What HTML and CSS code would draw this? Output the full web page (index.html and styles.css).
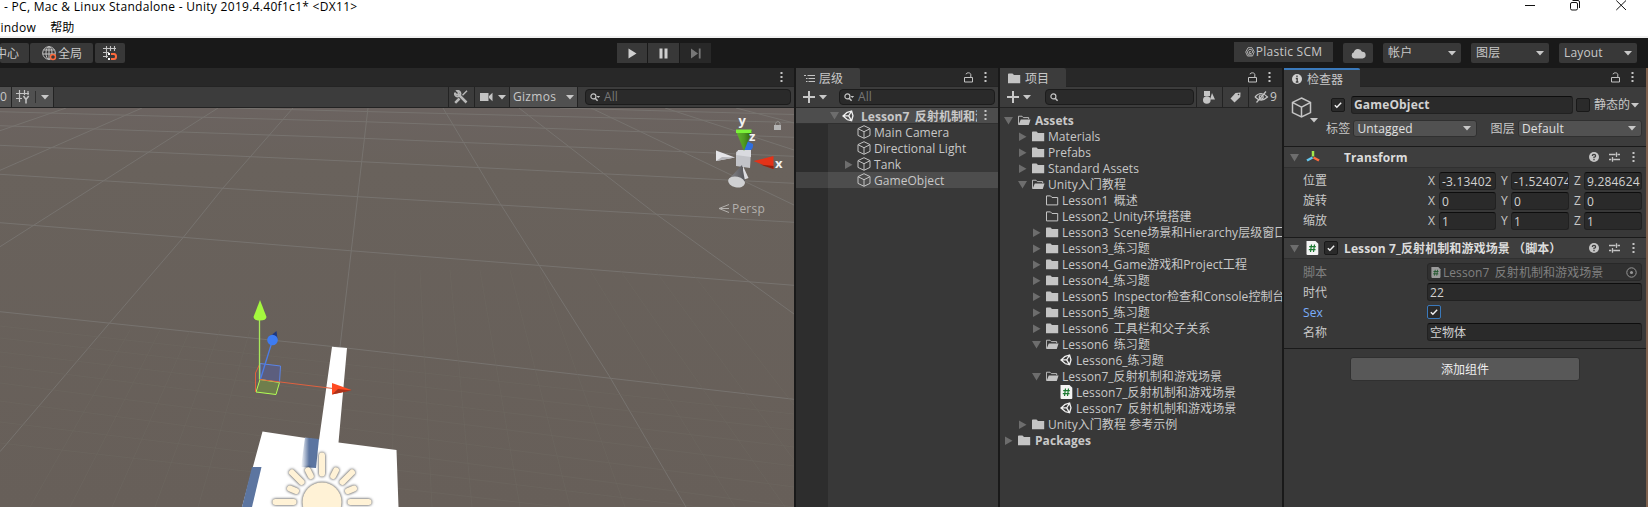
FILE: index.html
```html
<!DOCTYPE html>
<html lang="zh-CN">
<head>
<meta charset="utf-8">
<title>Unity 2019.4.40f1c1</title>
<link rel="stylesheet" href="styles.css">
</head>
<body>
<svg class="defs" width="0" height="0">
  <symbol id="down" viewBox="0 0 8 5"><path d="M0 0h8L4 4.6z" fill="currentColor"/></symbol>
  <symbol id="fold-open" viewBox="0 0 9 9"><path d="M0 1h9L4.500 8.500z" fill="#6d6d6d"/></symbol>
  <symbol id="fold-closed" viewBox="0 0 9 9"><path d="M1 0.500v8.500L8.500 4.700z" fill="#6d6d6d"/></symbol>
  <symbol id="dots" viewBox="0 0 3 11"><path d="M.5 0h2v2h-2zM.5 4h2v2h-2zM.5 8h2v2h-2z" fill="#c4c4c4"/></symbol>
  <symbol id="lock" viewBox="0 0 9 11"><path d="M.5 5.500h8v4.500h-8zM2 2.300C2 .3 6.800 .3 6.800 2.500v3" fill="none" stroke="#c4c4c4"/></symbol>
  <symbol id="plus" viewBox="0 0 12 12"><path d="M6 0v12M0 6h12" stroke="#c8c8c8" stroke-width="2"/></symbol>
  <symbol id="search" viewBox="0 0 11 9"><path d="M5.200 5.200L7.600 7.800" stroke="#c4c4c4" stroke-width="1.500"/><circle cx="3.400" cy="3.400" r="2.500" fill="none" stroke="#c4c4c4" stroke-width="1.200"/></symbol>
  <symbol id="search-menu" viewBox="0 0 11 9"><path d="M5.200 5.200L7.600 7.800" stroke="#c4c4c4" stroke-width="1.500"/><circle cx="3.400" cy="3.400" r="2.500" fill="none" stroke="#c4c4c4" stroke-width="1.200"/><path d="M6.500 3h3.700L8.300 5z" fill="#c4c4c4"/></symbol>
  <symbol id="folder" viewBox="0 0 13 11"><path d="M0 1.200Q0 .4 .8 .4H4.500L6 2H12.200V10.300H0z" fill="#c4c4c4"/></symbol>
  <symbol id="folder-empty" viewBox="0 0 13 11"><path d="M.5 .9H4.500L6 2.500H11.700V9.900H.5z" fill="none" stroke="#c4c4c4"/></symbol>
  <symbol id="folder-open" viewBox="0 0 14 11"><path d="M.5 10V.9H4.300L5.800 2.400H11.500V4" fill="none" stroke="#c4c4c4"/><path d="M3 4.300H13.500L11.600 10.400H.5z" fill="#c4c4c4"/></symbol>
  <symbol id="cube" viewBox="0 0 14 14"><path d="M7 .7L13 3.600V10.400L7 13.300L1 10.400V3.600zM1.200 3.800L7 6.700L12.800 3.800M7 6.700V13" fill="none" stroke="#c4c4c4" stroke-width="1"/></symbol>
  <symbol id="unity" viewBox="0 0 12 12"><path d="M5.200 2.300L9.600 1L11 5.800L9.600 10.800L5.200 9.600M5.200 2.300L1 5.900L5.200 9.600M1.500 5.900H6.700M9.600 1L6.700 5.900L9.600 10.800" fill="none" stroke="#f0f0f0" stroke-width="1.300"/></symbol>
  <symbol id="script" viewBox="0 0 13 14"><path d="M.5 0H9.500L12.300 2.800V13Q12.300 14 11.300 14H1.500Q.5 14 .5 13z" fill="#f4f4f4"/><path d="M5.500 3.500L4.500 11M8.500 3.500L7.500 11M3.200 5.700H9.800M2.800 8.700H9.500" stroke="#1c7a31" stroke-width="1.200"/></symbol>
  <symbol id="check" viewBox="0 0 14 14"><path d="M3.300 7.200L5.700 9.600L10.700 4.500" fill="none" stroke="#f0f0f0" stroke-width="1.700"/></symbol>
  <symbol id="help" viewBox="0 0 10 10"><circle cx="5" cy="5" r="5" fill="#c4c4c4"/><path d="M3.400 4Q3.400 2.400 5 2.400T6.600 3.900Q6.600 4.900 5 5.200V6.300M5 7V8.300" fill="none" stroke="#3c3c3c" stroke-width="1.300"/></symbol>
  <symbol id="preset" viewBox="0 0 11 10"><path d="M0 2.500H6.500M8.500 2.500H11M7.500 .2V5M0 7.500H2.300M4.300 7.500H11M3.500 5V9.800" stroke="#c4c4c4" stroke-width="1.300"/></symbol>
</svg>

<header class="window-bar">
  <div class="title">- PC, Mac &amp; Linux Standalone - Unity 2019.4.40f1c1* &lt;DX11&gt;</div>
  <div class="window-buttons">
    <svg width="102" height="12" viewBox="0 0 102 12" fill="none" stroke="#111"><path d="M0 5.500H10M91.300 .5L101 10M101 .5L91.300 10"/><rect x="45.500" y="2.500" width="7" height="7.500" rx="1.500"/><path d="M47.500 .5H53Q54.500 .5 54.500 2V8"/></svg>
  </div>
</header>
<nav class="menu"><span class="menu-window">Window</span><span>帮助</span></nav>

<div class="toolbar">
  <div class="tool-group">
    <div class="tool center-mode"><span>中心</span></div>
    <div class="tool global"><svg width="15" height="15" viewBox="0 0 15 15" fill="none" stroke="#c4c4c4"><circle cx="7" cy="7" r="6.300"/><ellipse cx="7" cy="7" rx="3" ry="6.300"/><path d="M7 .7V13.300M1.500 4H12.500M.7 8H13"/><circle cx="11" cy="11" r="2.500" fill="#383838" stroke="#ff6b3d" stroke-width="1.400"/></svg><span>全局</span></div>
    <div class="tool snap"><svg width="14" height="15" viewBox="0 0 14 15"><path d="M3.500 0V12M7.500 0V5M11.500 0V5M0 2.500H13M0 6.500H6M0 10.500H5" stroke="#c4c4c4" stroke-width="1.100"/><path d="M5 7h2v2H5zM5 12h2v2H5z" fill="#fff"/><path d="M8 8H11Q13 8 13 10.500T11 13H8" fill="none" stroke="#ff6b3d" stroke-width="2"/></svg></div>
  </div>
  <div class="play-group">
    <div class="tool"><svg width="9" height="11"><path d="M.5 .5L8.500 5.500L.5 10.500z" fill="#d0d0d0"/></svg></div>
    <div class="tool"><svg width="9" height="11"><path d="M.5 .5h3v10h-3zM5.500 .5h3v10h-3z" fill="#d0d0d0"/></svg></div>
    <div class="tool muted"><svg width="10" height="11"><path d="M0 .5L7 5.500L0 10.500zM7.800 .5h1.800v10H7.800z" fill="#777"/></svg></div>
  </div>
  <div class="account-group">
    <div class="tool plastic"><svg width="10" height="10" viewBox="0 0 10 10" fill="none" stroke="#aaa"><path d="M3 .7H7L9.200 4.800L7.500 9H2.500L.7 5z"/><path d="M7 8H3.500L2.300 4.800L4 2.500H6.500L7.800 5L6.300 6.500H4.500L4.200 4.700H6"/></svg><span>Plastic SCM</span></div>
    <div class="tool cloud"><svg width="15" height="11" viewBox="0 0 15 11"><path d="M3.500 10.500A3.200 3.200 0 0 1 2.800 4.300A4.300 4.300 0 0 1 11 3.700A3.400 3.400 0 0 1 11.500 10.500z" fill="#c4c4c4"/></svg></div>
    <div class="tool menu-button"><span>帐户</span><svg class="down"><use href="#down"/></svg></div>
    <div class="tool menu-button"><span>图层</span><svg class="down"><use href="#down"/></svg></div>
    <div class="tool menu-button"><span>Layout</span><svg class="down"><use href="#down"/></svg></div>
  </div>
</div>

<main class="workspace">
  <section class="pane scene">
    <div class="tabs"><svg class="dots"><use href="#dots"/></svg></div>
    <div class="bar">
      <div class="bar-button zero">0</div>
      <div class="bar-button grid-axis"><svg width="14" height="14" viewBox="0 0 14 14"><path d="M3.500 0V12M8.500 0V5M0 3.500H13M0 8.500H6M12 1V5" stroke="#c4c4c4" stroke-width="1.200"/><path d="M7.500 6L10 9.500L12.700 6M10 9.500V13.500" fill="none" stroke="#c4c4c4" stroke-width="1.500"/></svg><i></i><svg class="down"><use href="#down"/></svg></div>
      <div class="bar-space"></div>
      <div class="bar-button plain tools"><svg width="14" height="14" viewBox="0 0 14 14" fill="none" stroke="#b8b8b8"><path d="M4 4L12.500 12.500" stroke-width="2.500"/><path d="M.8 2.800L3 5L5 3L2.800 .8A3 3 0 1 1 .8 2.800" stroke-width="1.500"/><path d="M13 .8L8.500 5.300" stroke-width="1.500"/><path d="M5.500 8.500L1.200 12.800" stroke-width="2.500"/></svg></div>
      <div class="bar-button plain camera"><svg width="13" height="10"><path d="M0 1h8.500v8H0zM9 4L12.500 .8V9.200L9 6z" fill="#c4c4c4"/></svg><svg class="down"><use href="#down"/></svg></div>
      <div class="bar-button gizmos"><span>Gizmos</span><i></i><svg class="down"><use href="#down"/></svg></div>
      <div class="search"><svg class="lens"><use href="#search-menu"/></svg><span>All</span></div>
    </div>
    <svg class="viewport" viewBox="0 108 794 399" width="794" height="399">
      <defs>
        <linearGradient id="ground" x1="0" y1="0" x2="0" y2="1"><stop offset="0" stop-color="#6b6360"/><stop offset=".15" stop-color="#69625c"/><stop offset="1" stop-color="#675f59"/></linearGradient>
        <linearGradient id="shade" x1="0" y1="0" x2="1" y2="0"><stop offset="0" stop-color="#fff"/><stop offset=".45" stop-color="#5c75a0"/><stop offset="1" stop-color="#5c75a0"/></linearGradient>
        <linearGradient id="coneGreen"><stop offset="0" stop-color="#62b42e"/><stop offset=".5" stop-color="#4f9a22"/><stop offset="1" stop-color="#2c5c10"/></linearGradient>
        <linearGradient id="coneGray"><stop offset="0" stop-color="#8a8a8e"/><stop offset="1" stop-color="#55555a"/></linearGradient>
        <filter id="halo" x="-20%" y="-20%" width="140%" height="140%" color-interpolation-filters="sRGB"><feDropShadow dx="0" dy="0" stdDeviation="1.800" flood-color="#000" flood-opacity=".85"/></filter>
      </defs>
      <rect y="108" width="794" height="399" fill="url(#ground)"/>
      <g fill="none" stroke="#77736f" stroke-width="1">
        <path d="M0 311.700L340 347.300L794 399.300M0 222.700L350 250.700L794 285.300M0 174.300L358 196.700L794 222.300M0 145.300L361 161.700L794 183.300M0 125.700L363 138.300L794 156.300M0 111.700L364 121.700L794 137.300M230 108L365 111.500L794 122.500M560 108L794 114.500"/>
        <path d="M368 108L340 347M293 108L223 188L183 237.700L109 323.700L0 451.700M218 108L0 246.700M142 108L0 170.300M66 108L0 130.700M443 108L500 203.300L539 265L609 375.700L686 507M519 108L655 213.300L794 314M591 108L794 205M665 108L794 150M736 108L794 123"/>
      </g>
      <g fill="none" stroke="#6d6761" stroke-width="1" opacity=".55">
        <path d="M0 338L794 430M0 366L794 466M0 401L794 507M0 443L560 507M0 326L794 414M0 352L794 447M0 383L794 487M0 422L700 507M130 330L30 507M160 330L70 507M190 330L112 507M220 330L155 507M250 330L198 507M395 270L392 507M420 270L432 507M450 270L472 507M480 270L520 507M510 270L570 507M540 270L625 507M590 270L735 507M620 270L785 507M655 270L794 460M690 270L794 405"/>
      </g>
      <path fill="#fff" d="M332 346.700L347 348L338.500 442.500L396.500 450L398.500 507H242L262.500 431.500L319 440z"/>
      <path fill="url(#shade)" d="M305 437.500L319 439L316 468L301 467z"/>
      <path fill="#5c75a0" d="M252 467H261.500L252 507H242z"/>
      <g filter="url(#halo)" fill="#fff2d6" stroke="#fff2d6" stroke-width="6" stroke-linecap="round">
        <circle cx="322" cy="502" r="19.500" stroke="none"/>
        <path d="M322 455.500V473.500M275.500 502H293.500M350.500 502H368.500M292 472.500L301.500 482M352 472.500L342.500 482M308 470.500L310.800 476M336 470.500L333.200 476M290 488.500L296 491M354 488.500L348 491"/>
      </g>
      <path fill="#5c5e7e" stroke="#5a84e8" d="M260 363.500L280.500 366L279.500 382.500L260 379.500z"/>
      <path fill="#6f7e4c" stroke="#b2ff55" d="M260 379.500L279.500 382.500L276 394.500L256 392z"/>
      <path fill="none" stroke="#e0603f" d="M260 363.500L255.500 373V392M260 379.500L333 388.500"/>
      <path d="M259.500 379.500V318" stroke="#a8e85b" stroke-width="1.300"/>
      <path d="M260.500 379L272 342" stroke="#4c7de8" stroke-width="1.300"/>
      <path fill="#a4f73e" d="M260 300L266.500 317Q266 320.500 260 320.500T253.500 317z"/>
      <path fill="#1d3780" d="M276.500 331L268 338L277.500 339z"/><circle cx="272.500" cy="340" r="5.300" fill="#3e7cf2"/>
      <path fill="#ff4b22" d="M332 383L351.500 390L332 394.500z"/><path fill="#a9321b" d="M332 394.500L351.500 390.500L338 389z"/>
      <path fill="#2f6fe0" d="M744 150L747 141L753 144Q754 149 749 151z"/>
      <path fill="#c2c3c8" d="M736 152L740 150L751 151L750 168L736 166z"/><path fill="#d9dadf" d="M738 150H751V157L736 155z"/>
      <path fill="#e4e4e8" d="M716 150.500L735 157.500L716 161z"/><path fill="#b5b5ba" d="M716 161L735 157.500L722 157z"/>
      <path fill="url(#coneGreen)" d="M736 131L744 151L752 131z"/><path fill="#7cf23a" d="M736 129.500H751.500V133H736z"/>
      <path fill="#e33319" d="M753.500 161L773.500 156V169z"/><path fill="#92210f" d="M760 164.500L773.500 166V169z"/>
      <path fill="#dcdce0" d="M743 166L748.500 178L743 180z"/>
      <path fill="url(#coneGray)" d="M742 165L728 180L745 181z"/><ellipse cx="736.500" cy="182" rx="8.500" ry="5.300" fill="#cfd0d2" transform="rotate(12 736.500 182)"/>
      <g class="axis-label"><text x="738.500" y="124.500">y</text><text x="749" y="141">z</text><text x="775" y="168">x</text></g>
      <path fill="#b4b4b4" d="M774 125h7v5h-7z"/><path d="M775.500 125V123.500Q777.500 119.500 780 123V125" fill="none" stroke="#92908d"/>
      <path d="M729 204.500L719 208.500L729 212.500M719 208.500H729" fill="none" stroke="#b3b0ad"/>
      <text class="persp" x="732" y="213">Persp</text>
    </svg>
  </section>

  <section class="pane hierarchy">
    <div class="tabs"><div class="tab"><svg width="11" height="9"><path d="M3.500 1.500H11M4.500 4.500H11M4.500 7.500H11M0 1.500H2M2 4.500H3.500M2 7.500H3.500" stroke="#c4c4c4"/></svg><span>层级</span></div><svg class="lock"><use href="#lock"/></svg><svg class="dots"><use href="#dots"/></svg></div>
    <div class="bar">
      <svg class="plus"><use href="#plus"/></svg><svg class="down add-menu"><use href="#down"/></svg>
      <div class="search"><svg class="lens"><use href="#search-menu"/></svg><span>All</span></div>
    </div>
    <div class="tree">
      <div class="node scene-node"><svg class="fold"><use href="#fold-open"/></svg><svg class="ico-unity"><use href="#unity"/></svg><span class="scene-name spaced">Lesson7 反射机制和游戏场景</span><svg class="dots"><use href="#dots"/></svg></div>
      <div class="node object"><svg class="ico-cube"><use href="#cube"/></svg><span>Main Camera</span></div>
      <div class="node object"><svg class="ico-cube"><use href="#cube"/></svg><span>Directional Light</span></div>
      <div class="node object parent"><svg class="fold"><use href="#fold-closed"/></svg><svg class="ico-cube"><use href="#cube"/></svg><span>Tank</span></div>
      <div class="node object selected"><svg class="ico-cube"><use href="#cube"/></svg><span>GameObject</span></div>
    </div>
  </section>

  <section class="pane project">
    <div class="tabs"><div class="tab"><svg class="ico-folder"><use href="#folder"/></svg><span>项目</span></div><svg class="lock"><use href="#lock"/></svg><svg class="dots"><use href="#dots"/></svg></div>
    <div class="bar">
      <svg class="plus"><use href="#plus"/></svg><svg class="down add-menu"><use href="#down"/></svg>
      <div class="search"><svg class="lens"><use href="#search"/></svg></div>
      <div class="bar-button plain filter"><svg width="13" height="13"><path d="M1 0h6v5H1zM9 2L12 8.500H7z" fill="#c4c4c4"/><circle cx="3.800" cy="9" r="3.800" fill="#c4c4c4"/></svg></div>
      <div class="bar-button plain filter"><svg width="11" height="11"><path d="M5.500 1L10.500 .5L10.300 5L4.500 10.500L.5 6.500z" fill="#c4c4c4"/><circle cx="8.500" cy="2.500" r=".8" fill="#3c3c3c"/></svg></div>
      <div class="bar-button plain hidden-count"><svg width="15" height="12" viewBox="0 0 15 12" fill="none" stroke="#c4c4c4" stroke-width="1.200"><path d="M1 6Q7 -1 13.500 6Q7 12 1 6M12 .5L2.500 11.500"/><circle cx="7.200" cy="6" r="2"/></svg><span>9</span></div>
    </div>
    <div class="files">
      <div class="node level0 strong"><svg class="fold"><use href="#fold-open"/></svg><svg class="ico-folder"><use href="#folder-open"/></svg><span>Assets</span></div>
      <div class="node level1"><svg class="fold"><use href="#fold-closed"/></svg><svg class="ico-folder"><use href="#folder"/></svg><span>Materials</span></div>
      <div class="node level1"><svg class="fold"><use href="#fold-closed"/></svg><svg class="ico-folder"><use href="#folder"/></svg><span>Prefabs</span></div>
      <div class="node level1"><svg class="fold"><use href="#fold-closed"/></svg><svg class="ico-folder"><use href="#folder"/></svg><span>Standard Assets</span></div>
      <div class="node level1"><svg class="fold"><use href="#fold-open"/></svg><svg class="ico-folder"><use href="#folder-open"/></svg><span>Unity入门教程</span></div>
      <div class="node level2"><svg class="fold"></svg><svg class="ico-folder"><use href="#folder-empty"/></svg><span class="spaced">Lesson1 概述</span></div>
      <div class="node level2"><svg class="fold"></svg><svg class="ico-folder"><use href="#folder-empty"/></svg><span>Lesson2_Unity环境搭建</span></div>
      <div class="node level2"><svg class="fold"><use href="#fold-closed"/></svg><svg class="ico-folder"><use href="#folder"/></svg><span class="spaced">Lesson3 Scene场景和Hierarchy层级窗口</span></div>
      <div class="node level2"><svg class="fold"><use href="#fold-closed"/></svg><svg class="ico-folder"><use href="#folder"/></svg><span>Lesson3_练习题</span></div>
      <div class="node level2"><svg class="fold"><use href="#fold-closed"/></svg><svg class="ico-folder"><use href="#folder"/></svg><span>Lesson4_Game游戏和Project工程</span></div>
      <div class="node level2"><svg class="fold"><use href="#fold-closed"/></svg><svg class="ico-folder"><use href="#folder"/></svg><span>Lesson4_练习题</span></div>
      <div class="node level2"><svg class="fold"><use href="#fold-closed"/></svg><svg class="ico-folder"><use href="#folder"/></svg><span class="spaced">Lesson5 Inspector检查和Console控制台</span></div>
      <div class="node level2"><svg class="fold"><use href="#fold-closed"/></svg><svg class="ico-folder"><use href="#folder"/></svg><span>Lesson5_练习题</span></div>
      <div class="node level2"><svg class="fold"><use href="#fold-closed"/></svg><svg class="ico-folder"><use href="#folder"/></svg><span class="spaced">Lesson6 工具栏和父子关系</span></div>
      <div class="node level2"><svg class="fold"><use href="#fold-open"/></svg><svg class="ico-folder"><use href="#folder-open"/></svg><span class="spaced">Lesson6 练习题</span></div>
      <div class="node level3"><svg class="fold"></svg><svg class="ico-unity"><use href="#unity"/></svg><span>Lesson6_练习题</span></div>
      <div class="node level2"><svg class="fold"><use href="#fold-open"/></svg><svg class="ico-folder"><use href="#folder-open"/></svg><span>Lesson7_反射机制和游戏场景</span></div>
      <div class="node level3"><svg class="fold"></svg><svg class="ico-script"><use href="#script"/></svg><span>Lesson7_反射机制和游戏场景</span></div>
      <div class="node level3"><svg class="fold"></svg><svg class="ico-unity"><use href="#unity"/></svg><span class="spaced">Lesson7 反射机制和游戏场景</span></div>
      <div class="node level1"><svg class="fold"><use href="#fold-closed"/></svg><svg class="ico-folder"><use href="#folder"/></svg><span>Unity入门教程 参考示例</span></div>
      <div class="node level0 strong"><svg class="fold"><use href="#fold-closed"/></svg><svg class="ico-folder"><use href="#folder"/></svg><span>Packages</span></div>
    </div>
  </section>

  <section class="pane inspector">
    <div class="tabs"><div class="tab active"><svg width="10" height="10"><circle cx="5" cy="5" r="5" fill="#d0d0d0"/><path d="M5 1.500V3M3.800 4.500H5.200V8M3.800 8H6.400" fill="none" stroke="#3c3c3c" stroke-width="1.300"/></svg><span>检查器</span></div><svg class="lock"><use href="#lock"/></svg><svg class="dots"><use href="#dots"/></svg></div>
    <div class="object-head">
      <div class="object-icon"><svg class="big-cube"><use href="#cube"/></svg><svg class="down"><use href="#down"/></svg></div>
      <div class="object-lines">
        <div class="name-line"><svg class="check"><use href="#check"/></svg><div class="field name">GameObject</div><div class="check"></div><span class="static">静态的</span><svg class="down"><use href="#down"/></svg></div>
        <div class="tag-line"><span>标签</span><div class="dropdown"><span>Untagged</span><svg class="down"><use href="#down"/></svg></div><span class="layer-label">图层</span><div class="dropdown"><span>Default</span><svg class="down"><use href="#down"/></svg></div></div>
      </div>
    </div>
    <div class="component">
      <div class="component-head"><svg class="fold"><use href="#fold-open"/></svg><svg class="component-icon" width="14" height="14" viewBox="0 0 14 14"><path d="M7 1V6.500" stroke="#a4e84a" stroke-width="2.500"/><path d="M6.500 7.500L1 10.500" stroke="#66c8ef" stroke-width="2.500"/><path d="M7.500 7.500L13 10.500" stroke="#ff6b3d" stroke-width="2.500"/></svg><span class="component-name after-gap">Transform</span><svg class="help"><use href="#help"/></svg><svg class="preset"><use href="#preset"/></svg><svg class="dots"><use href="#dots"/></svg></div>
      <div class="props">
        <div class="vector"><span>位置</span><b>X</b><div class="field">-3.13402</div><b>Y</b><div class="field">-1.524074</div><b>Z</b><div class="field">9.284624</div></div>
        <div class="vector"><span>旋转</span><b>X</b><div class="field">0</div><b>Y</b><div class="field">0</div><b>Z</b><div class="field">0</div></div>
        <div class="vector"><span>缩放</span><b>X</b><div class="field">1</div><b>Y</b><div class="field">1</div><b>Z</b><div class="field">1</div></div>
      </div>
    </div>
    <div class="component script-component">
      <div class="component-head"><svg class="fold"><use href="#fold-open"/></svg><svg class="component-icon script-icon"><use href="#script"/></svg><svg class="check"><use href="#check"/></svg><span class="component-name">Lesson 7_反射机制和游戏场景 （脚本）</span><svg class="help"><use href="#help"/></svg><svg class="preset"><use href="#preset"/></svg><svg class="dots"><use href="#dots"/></svg></div>
      <div class="props">
        <div class="prop disabled"><span>脚本</span><div class="field object-ref"><svg class="mini-script"><use href="#script"/></svg><span class="spaced">Lesson7 反射机制和游戏场景</span><svg class="picker" width="11" height="11"><circle cx="5.500" cy="5.500" r="4.700" fill="none" stroke="#999"/><circle cx="5.500" cy="5.500" r="1.500" fill="#999"/></svg></div></div>
        <div class="prop"><span>时代</span><div class="field">22</div></div>
        <div class="prop focus"><span>Sex</span><svg class="check focused"><use href="#check"/></svg></div>
        <div class="prop"><span>名称</span><div class="field">空物体</div></div>
      </div>
    </div>
    <div class="add-area"><div class="add-component">添加组件</div></div>
  </section>
  <div class="desktop-edge"></div>
</main>
</body>
</html>
```

FILE: styles.css
```css
* { box-sizing: border-box; }
body {
  margin: 0; width: 1648px; height: 507px; overflow: hidden;
  display: flex; flex-direction: column;
  background: #191919; color: #c8c8c8;
  font: 12px/16px "Open Sans", "Noto Sans CJK SC", sans-serif;
  letter-spacing: .06px;
  white-space: nowrap;
}
svg { display: block; flex: none; }
.defs { position: absolute; }

.window-bar { height: 18px; background: #fff; color: #000; display: flex; justify-content: space-between; padding: 0 18px 0 4px; }
.title { line-height: 14px; letter-spacing: .3px; }
.window-buttons { padding-right: 3px; }
.menu { height: 20px; background: #fff; color: #000; border-bottom: 2px solid #f0f0f0; display: flex; gap: 14px; line-height: 19px; }
.menu-window { margin-left: -11px; letter-spacing: .3px; }

.toolbar { height: 30px; display: grid; grid-template-columns: 617px 1fr 414px; align-items: start; padding-top: 5px; }
.tool { height: 20px; background: #383838; display: flex; align-items: center; justify-content: center; border-radius: 2px; }
.tool-group { display: flex; gap: 1px; }
.tool-group span { padding-top: 2px; }
.center-mode { width: 29px; justify-content: flex-end; padding-right: 10px; }
.global { width: 63px; gap: 1px; padding-left: 1px; }
.snap { width: 30px; margin-left: 1px; }
.play-group { display: flex; gap: 1px; }
.play-group .tool { width: 31px; border-radius: 0; }
.play-group .tool:first-child { width: 30px; }
.play-group .muted { background: #282828; }
.account-group { display: flex; gap: 10px; }
.plastic { width: 99px; margin-top: -1px; border-radius: 0; gap: 1px; letter-spacing: .25px; }
.cloud { width: 30px; }
.menu-button { width: 78px; padding: 0 5px; justify-content: space-between; letter-spacing: .15px; }
.down { width: 8px; height: 5px; color: #c8c8c8; }

.workspace { flex: 1; display: grid; grid-template-columns: 794px 202px 282px 362px 2px; column-gap: 2px; }
.desktop-edge { margin-left: -2px; background: #7d604d; }
.pane { background: #383838; overflow: hidden; min-width: 0; height: 439px; }
.tabs { height: 19px; background: #282828; display: flex; align-items: center; padding-right: 11px; border-bottom: 1px solid #242424; }
.tab { height: 19px; background: #3c3c3c; display: flex; align-items: center; gap: 4px; padding: 2px 17px 0 8px; border-radius: 0 2px 0 0; }
.tab span { padding-top: 2px; }
.tab.active { border-top: 2px solid #3a79bb; padding-top: 1px; }
.dots { width: 3px; height: 11px; }
.lock { width: 9px; height: 11px; margin-left: auto; margin-right: 11px; }
.scene .tabs { justify-content: flex-end; padding-right: 11px; }
.bar { height: 21px; background: #3c3c3c; border-bottom: 1px solid #232323; display: flex; align-items: center; }
.bar-button { height: 20px; background: #505050; border-right: 1px solid #232323; display: flex; align-items: center; padding: 0 4px; }
.bar-button.plain { background: none; border-right: 0; border-left: 1px solid #232323; }
.bar-button i { width: 1px; height: 12px; background: #303030; }
.bar-space { flex: 1; }
.zero { width: 12px; padding: 0; }
.grid-axis { width: 42px; gap: 5px; }
.tools { width: 26px; padding: 0 5px; }
.camera { width: 35px; gap: 5px; padding: 0 5px; }
.gizmos { width: 69px; padding: 0 3px; gap: 5px; border-left: 1px solid #232323; letter-spacing: .3px; }
.search { height: 16px; background: #2a2a2a; border: 1px solid #1c1c1c; border-radius: 4px; display: flex; align-items: center; gap: 3px; padding-left: 4px; color: #777; }
.lens { width: 11px; height: 9px; }
.scene .search { width: 206px; margin: 0 3px 0 7px; }
.plus { width: 12px; height: 12px; margin-left: 7px; }
.add-menu { margin: 0 12px 0 4px; }
.hierarchy .search { width: 156px; }
.project .search { width: 149px; margin: 0 2px; }
.filter { width: 26px; justify-content: center; }
.hidden-count { padding: 0 0 0 5px; gap: 1px; width: 34px; }
.viewport { display: block; }
.axis-label { font: bold 13px "Open Sans", sans-serif; fill: #f2f2f2; }
.persp { font: 12px "Open Sans", sans-serif; fill: #b3b0ad; letter-spacing: .2px; }

.node { height: 16px; display: flex; align-items: center; }
.node > span { padding-top: 2px; line-height: 16px; }
.spaced { word-spacing: 2.3px; }
.fold { width: 9px; height: 9px; }
.ico-cube { width: 14px; height: 14px; }
.ico-unity { width: 12px; height: 12px; }
.ico-folder { width: 13px; height: 11px; }
.ico-script { width: 13px; height: 14px; }
.tree { height: 399px; background: linear-gradient(90deg, #2d2d2d 32px, #383838 32px); }
.scene-node { background: #4d4d4d; border-bottom: 1px solid #303030; font-weight: bold; padding: 0 10px 0 34px; }
.scene-node .ico-unity { margin: 0 7px 0 3px; }
.scene-name { width: 116px; overflow: hidden; margin-right: 7px; }
.object { padding-left: 61px; gap: 3px; }
.object.parent { padding-left: 49px; }
.parent .fold { margin-left: -1px; margin-right: 1px; }
.selected { background: linear-gradient(90deg, #424242 32px, #4d4d4d 32px); }
.files { padding-top: 4px; }
.files .fold { margin-right: 5px; }
.files .ico-folder, .files .ico-unity, .files .ico-script { margin-right: 3px; }
.files .ico-unity { margin-right: 4px; }
.files .strong .ico-folder { margin-right: 4px; }
.level0 { padding-left: 4px; }
.level1 { padding-left: 18px; }
.level2 { padding-left: 32px; }
.level3 { padding-left: 46px; }
.strong { font-weight: bold; }

.field { height: 18px; background: #2a2a2a; border: 1px solid #212121; border-top-color: #0d0d0d; border-radius: 3px; padding: 0 2px; line-height: 17px; overflow: hidden; color: #d2d2d2; min-width: 0; }
.check { width: 14px; height: 14px; background: #2a2a2a; border: 1px solid #191919; border-radius: 2px; flex: none; }
.inspector .tabs { padding-right: 12px; }
.inspector .tab { padding-right: 17px; gap: 5px; }
.object-head { height: 60px; background: #3c3c3c; border-bottom: 1px solid #1a1a1a; display: flex; padding: 9px 4px 0 7px; gap: 6px; }
.object-icon { width: 28px; padding-top: 1px; }
.object-icon .down { margin: 0 0 0 19px; }
.big-cube { width: 21px; height: 21px; }
.object-lines { flex: 1; display: flex; flex-direction: column; gap: 7px; }
.name-line { display: flex; align-items: center; padding-left: 6px; }
.name { width: 222px; margin: 0 3px 0 6px; font-weight: bold; letter-spacing: .15px; line-height: 16px; }
.static { margin-left: 4px; width: 37px; }
.tag-line { display: flex; align-items: center; justify-content: space-between; padding-left: 1px; margin-top: -1px; letter-spacing: .15px; }
.layer-label { margin-left: 10px; }
.dropdown { width: 124px; height: 17px; background: #515151; border: 1px solid #303030; border-radius: 3px; color: #e0e0e0; display: flex; align-items: center; justify-content: space-between; padding: 0 5px 0 3px; }
.component { border-bottom: 1px solid #1a1a1a; height: 91px; }
.script-component { height: 111px; }
.component-head { height: 21px; background: #3e3e3e; border-bottom: 1px solid #303030; display: flex; align-items: center; padding: 0 11px 0 6px; font-weight: bold; color: #dcdcdc; }
.component-head .fold { margin-top: 1px; }
.component-icon { margin: 0 5px 0 7px; }
.script-icon { width: 13px; height: 14px; margin: 0 5px 0 7px; }
.component-name { margin-left: 6px; padding-top: 2px; letter-spacing: .1px; }
.component-name.after-gap { margin-left: 19px; }
.help { width: 10px; height: 10px; margin-left: auto; margin-right: 10px; }
.preset { width: 11px; height: 10px; margin-right: 12px; }
.props { padding: 4px 4px 0 19px; display: flex; flex-direction: column; gap: 2px; }
.vector { display: grid; grid-template-columns: 125px 11px 57px 15px 58px 15px 58px; height: 18px; }
.vector > span, .vector b { padding-top: 1px; }
.vector .field { letter-spacing: .2px; }
.vector b { font-weight: normal; }
.vector b:not(:nth-child(2)) { padding-left: 5px; }
.prop { height: 18px; display: grid; grid-template-columns: 124px 215px; align-items: center; }
.prop > span { padding-top: 1px; }
.disabled { color: #808080; }
.object-ref { display: flex; align-items: center; color: #808080; background: #303030; border-color: #282828; padding: 0 4px 0 3px; gap: 2px; }
.mini-script { width: 10px; height: 11px; opacity: .55; }
.picker { margin-left: auto; }
.focus { color: #7baefa; }
.focused { border-color: #3a79bb; }
.add-area { padding: 8px 66px; }
.add-component { height: 24px; line-height: 23px; text-align: center; background: #585858; border: 1px solid #303030; border-radius: 3px; color: #eee; }
```
